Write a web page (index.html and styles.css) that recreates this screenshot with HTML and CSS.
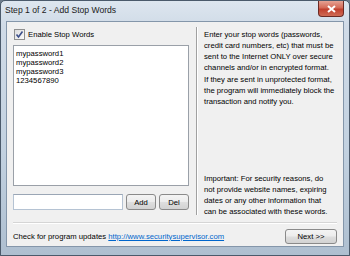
FILE: index.html
```html
<!DOCTYPE html>
<html lang="en">
<head>
  <meta charset="UTF-8" />
  <title>Step 1 of 2 - Add Stop Words</title>
  <link rel="stylesheet" href="styles.css">
</head>
<body>

  <div class="window">
    <div class="titlebar">
      <span class="title">Step 1 of 2 - Add Stop Words</span>
      <button class="close" aria-label="Close">
        <svg width="9" height="8" viewBox="0 0 9 8"><path d="M1 1 L8 7 M8 1 L1 7" stroke="#fff" stroke-width="2" /></svg>
      </button>
    </div>

    <div class="client">
      <div class="main">
        <!-- word list -->
        <div class="left">
          <label class="check-row">
            <span class="checkbox">
              <svg width="9" height="9" viewBox="0 0 9 9"><path d="M1.5 4.5 L3.5 7 L7.5 1.5" fill="none" stroke="#3c4f8a" stroke-width="1.6" /></svg>
            </span>
            Enable Stop Words
          </label>

          <ul class="word-list">
            <li>mypassword1</li>
            <li>mypassword2</li>
            <li>mypassword3</li>
            <li>1234567890</li>
          </ul>

          <div class="add-row">
            <input type="text" class="word-input" />
            <button class="btn">Add</button>
            <button class="btn">Del</button>
          </div>
        </div>

        <!-- help text, broken like the original static label -->
        <div class="info">
          <p>Enter your stop words (passwords,<br>credit card numbers, etc) that must be<br>sent to the Internet ONLY over secure<br>channels and/or in encrypted format.</p>
          <p>If they are sent in unprotected format,<br>the program will immediately block the<br>transaction and notify you.</p>
          <p class="note">Important: For security reasons, do<br>not provide website names, expiring<br>dates or any other information that<br>can be associated with these words.</p>
        </div>
      </div>

      <div class="separator"></div>

      <div class="footer">
        <span>Check for program updates <a href="#">http://www.securitysupervisor.com</a></span>
        <button class="btn next">Next &gt;&gt;</button>
      </div>
    </div>
  </div>

</body>
</html>
```

FILE: styles.css
```css
body {
  margin: 0;
  background: #6d7c8c;
  font-family: "Liberation Sans", Arial, sans-serif;
  font-size: 7.7px;
  color: #000;
}

.window {
  width: 350px;
  height: 256px;
  box-sizing: border-box;
  display: flex;
  flex-direction: column;
  border: 1px solid #4b5a6b;
  border-radius: 5px 5px 0 0;
  background: linear-gradient(180deg, #dde6ef 0%, #d0dbe7 10%, #c2d1e0 60%, #aebfd0 100%);
}

.titlebar {
  height: 20px;
  display: flex;
  justify-content: space-between;
  align-items: flex-start;
  padding-left: 4px;
}

.title {
  margin-top: 4px;
  font-size: 8.6px;
  color: #1b1b1b;
}

.close {
  width: 26px;
  height: 16px;
  margin-right: 5px;
  padding: 0;
  border: 1px solid #6b2a24;
  border-top: none;
  border-radius: 0 0 4px 4px;
  background: linear-gradient(180deg, #e5a293 0%, #d46a57 45%, #c1402e 55%, #cf6b55 100%);
  display: flex;
  align-items: center;
  justify-content: center;
}

.client {
  flex: 1;
  margin: 0 5px 8px;
  padding: 5px 6px 0;
  border: 1px solid #8496aa;
  background: #f0f0f0;
  display: flex;
  flex-direction: column;
}

.main {
  height: 188px;
  display: flex;
}

.left {
  width: 176px;
  display: flex;
  flex-direction: column;
}

.check-row {
  margin-top: 2px;
  margin-left: 1px;
  height: 11px;
  display: flex;
  align-items: center;
  gap: 3px;
}

.checkbox {
  width: 9px;
  height: 9px;
  border: 1px solid #8e8f8f;
  background: linear-gradient(135deg, #dcdcdc, #fbfbfb);
  display: flex;
  align-items: center;
  justify-content: center;
}

.word-list {
  list-style: none;
  margin: 5px 0 0;
  padding: 3px 2px;
  height: 141px;
  box-sizing: border-box;
  border: 1px solid #9aa0a8;
  background: #fff;
  line-height: 9px;
}

.add-row {
  margin-top: 8px;
  display: flex;
  gap: 3px;
  height: 16px;
}

.word-input {
  width: 110px;
  box-sizing: border-box;
  margin: 0;
  border: 1px solid #b5c3d3;
  border-top-color: #9aa6b5;
  background: #fff;
}

.btn {
  font-family: inherit;
  font-size: 7.7px;
  padding: 0;
  border: 1px solid #8a8a8a;
  border-radius: 3px;
  color: #000;
  background: linear-gradient(180deg, #f4f4f4 0%, #ececec 48%, #dedede 52%, #d2d2d2 100%);
  width: 30px;
}

.info {
  flex: 1;
  margin-left: 7px;
  padding: 2px 0 0 7px;
  border-left: 1px solid #a0a0a0;
  box-shadow: inset 1px 0 0 #fff;
  line-height: 11px;
  white-space: nowrap;
  display: flex;
  flex-direction: column;
}

.info p {
  margin: 0 0 1px;
}

.info .note {
  margin-top: auto;
  margin-bottom: -2px;
}

.separator {
  margin-top: 7px;
  border-top: 1px solid #d5d5d5;
  border-bottom: 1px solid #fff;
}

.footer {
  margin-top: 5px;
  display: flex;
  justify-content: space-between;
  align-items: center;
}

.footer a {
  color: #0066cc;
}

.next {
  width: 52px;
  height: 15px;
}
```
